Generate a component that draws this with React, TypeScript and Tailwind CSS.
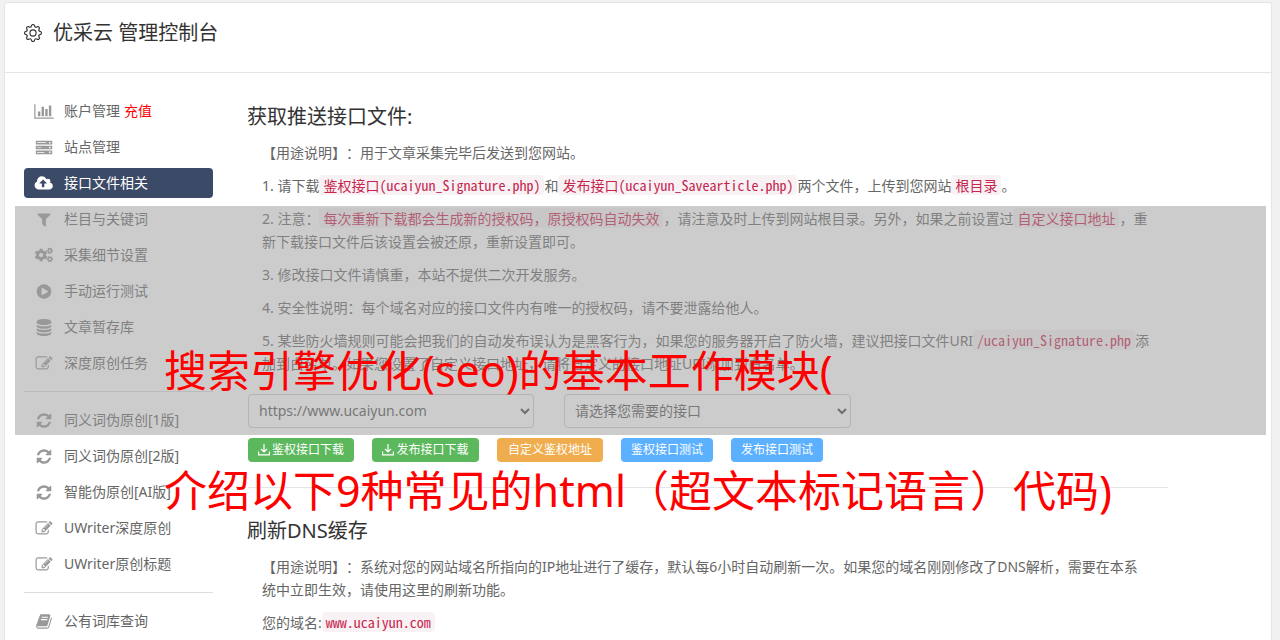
import type { ReactNode } from 'react';
import { FaCogs } from 'react-icons/fa';
import { BsGear } from 'react-icons/bs';

const icons = {
  chart: 'M640 896v512h-256v-512zM1024 384v1024h-256v-1024zM2048 1536v128h-2048v-1536h128v1408zM1408 640v768h-256v-768zM1792 256v1152h-256v-1152z',
  server:
    'M64 192h1728v384h-1728zM64 704h1728v384h-1728zM64 1216h1728v384h-1728zM192 352v64h960v-64zM192 864v64h448v-64zM192 1376v64h768v-64zM1456 304v160h160v-160zM1456 816v160h160v-160zM1456 1328v160h160v-160z',
  upload:
    'M1216 864q0-14-9-23l-352-352q-9-9-23-9t-23 9l-351 351q-10 12-10 24 0 14 9 23t23 9h224v352q0 13 9.5 22.5t22.5 9.5h192q13 0 22.5-9.5t9.5-22.5v-352h224q13 0 22.5-9.5t9.5-22.5zm640 288q0 159-112.5 271.5t-271.5 112.5h-1088q-185 0-316.5-131.5t-131.5-316.5q0-130 70-240t188-165q-2-30-2-43 0-212 150-362t362-150q156 0 285.5 87t188.5 231q71-62 166-62 106 0 181 75t75 181q0 76-41 138 130 31 213.5 135.5t83.5 238.5z',
  filter:
    'M1595 295q17 41-14 70l-493 493v742q0 42-39 59-13 5-25 5-27 0-45-19l-256-256q-19-19-19-45v-486l-493-493q-31-29-14-70 17-39 59-39h1280q42 0 59 39z',
  play: 'M896 128q209 0 385.5 103t279.5 279.5 103 385.5-103 385.5-279.5 279.5-385.5 103-385.5-103-279.5-279.5-103-385.5 103-385.5 279.5-279.5 385.5-103zm384 823q32-18 32-55t-32-55l-544-320q-31-19-64-1-32 19-32 56v640q0 37 32 56 16 8 32 8 17 0 32-9z',
  database:
    'M896 768q237 0 443-43t325-127v170q0 69-103 128t-280 93.5-385 34.5-385-34.5-280-93.5-103-128v-170q119 84 325 127t443 43zm0 768q237 0 443-43t325-127v170q0 69-103 128t-280 93.5-385 34.5-385-34.5-280-93.5-103-128v-170q119 84 325 127t443 43zm0-384q237 0 443-43t325-127v170q0 69-103 128t-280 93.5-385 34.5-385-34.5-280-93.5-103-128v-170q119 84 325 127t443 43zm0-1152q208 0 385 34.5t280 93.5 103 128v128q0 69-103 128t-280 93.5-385 34.5-385-34.5-280-93.5-103-128v-128q0-69 103-128t280-93.5 385-34.5z',
  edit: 'M888 1184l116-116-152-152-116 116v56h96v96h56zm440-720q-16-16-33 1l-350 350q-17 17-1 33t33-1l350-350q17-17 1-33zm80 594v190q0 119-84.5 203.5t-203.5 84.5h-832q-119 0-203.5-84.5t-84.5-203.5v-832q0-119 84.5-203.5t203.5-84.5h832q63 0 117 25 15 7 18 23 3 17-9 29l-49 49q-14 14-32 8-23-6-45-6h-832q-66 0-113 47t-47 113v832q0 66 47 113t113 47h832q66 0 113-47t47-113v-126q0-13 9-22l64-64q15-15 35-7t20 29zm-96-738l288 288-672 672h-288v-288zm444 132l-92 92-288-288 92-92q28-28 68-28t68 28l152 152q28 28 28 68t-28 68z',
  refresh:
    'M1639 1056q0 5-1 7-64 268-268 434.5t-478 166.5q-146 0-282.5-55t-243.5-157l-129 129q-19 19-45 19t-45-19-19-45v-448q0-26 19-45t45-19h448q26 0 45 19t19 45-19 45l-137 137q71 66 161 102t187 36q134 0 250-65t186-179q11-17 53-117 8-23 30-23h192q13 0 22.5 9.5t9.5 22.5zm25-800v448q0 26-19 45t-45 19h-448q-26 0-45-19t-19-45 19-45l138-138q-148-137-349-137-134 0-250 65t-186 179q-11 17-53 117-8 23-30 23h-199q-13 0-22.5-9.5t-9.5-22.5v-7q65-268 270-434.5t480-166.5q146 0 284 55.5t245 156.5l130-129q19-19 45-19t45 19 19 45z',
  book: 'M1703 478q40 57 18 129l-275 906q-19 64-76.5 107.5t-122.5 43.5h-923q-77 0-148.5-53.5t-99.5-131.5q-24-67-2-127 0-4 3-27t4-37q1-8-3-21.5t-3-19.5q2-11 8-21t16.5-23.5 16.5-23.5q23-38 45-91.5t30-91.5q3-10 .5-30t-.5-28q3-11 17-28t17-23q21-36 42-92t25-90q1-9-2.5-32t.5-28q4-13 22-30.5t22-22.5q19-26 42.5-84.5t27.5-96.5q1-8-3-25.5t-2-26.5q2-8 9-18t18-23 17-21q8-12 16.5-30.5t15-35 16-36 19.5-32 26.5-23.5 36-11.5 47.5 5.5l-1 3q38-9 51-9h761q74 0 114 56t18 130l-274 906q-36 119-71.5 153.5t-128.5 34.5h-869q-27 0-38 15-11 16-1 43 24 70 144 70h923q29 0 56-15.5t35-41.5l300-987q7-22 5-57 38 15 59 43zm-1064 2q-4 13 2 22.5t20 9.5h608q13 0 25.5-9.5t16.5-22.5l21-64q4-13-2-22.5t-20-9.5h-608q-13 0-25.5 9.5t-16.5 22.5zm-83 256q-4 13 2 22.5t20 9.5h608q13 0 25.5-9.5t16.5-22.5l21-64q4-13-2-22.5t-20-9.5h-608q-13 0-25.5 9.5t-16.5 22.5z',
};

type IconName = keyof typeof icons | 'cogs';

interface MenuItem {
  icon: IconName;
  label: string;
  extra?: string;
  active?: boolean;
}

const menu: MenuItem[][] = [
  [
    { icon: 'chart', label: '账户管理', extra: '充值' },
    { icon: 'server', label: '站点管理' },
    { icon: 'upload', label: '接口文件相关', active: true },
    { icon: 'filter', label: '栏目与关键词' },
    { icon: 'cogs', label: '采集细节设置' },
    { icon: 'play', label: '手动运行测试' },
    { icon: 'database', label: '文章暂存库' },
    { icon: 'edit', label: '深度原创任务' },
  ],
  [
    { icon: 'refresh', label: '同义词伪原创[1版]' },
    { icon: 'refresh', label: '同义词伪原创[2版]' },
    { icon: 'refresh', label: '智能伪原创[AI版]' },
    { icon: 'edit', label: 'UWriter深度原创' },
    { icon: 'edit', label: 'UWriter原创标题' },
  ],
  [{ icon: 'book', label: '公有词库查询' }],
];

const viewBoxes: Partial<Record<IconName, string>> = {
  chart: '0 0 2048 1792',
  upload: '0 0 1856 1792',
  server: '0 0 1856 1792',
};

function MenuIcon({ name }: { name: IconName }) {
  if (name === 'cogs') return <FaCogs size={18} />;
  return (
    <svg viewBox={viewBoxes[name] ?? '0 0 1792 1792'} className="h-[17px] w-5" fill="currentColor" fillRule="evenodd">
      <path d={icons[name]} />
    </svg>
  );
}

function Sidebar() {
  return (
    <nav className="w-[189px] shrink-0">
      {menu.map((group, i) => (
        <ul key={i} className={i > 0 ? 'mt-[13px] flex flex-col gap-1.5 border-t border-[#ddd] pt-[13px]' : 'flex flex-col gap-1.5'}>
          {group.map((item) => (
            <li key={item.label}>
              <a
                href="#"
                className={
                  item.active
                    ? 'flex h-[30px] items-center rounded-sm bg-[#3b4a66] pl-2.5 text-white'
                    : 'flex h-[30px] items-center pl-2.5 text-[#666]'
                }
              >
                <span className={item.active ? 'mr-2.5 flex w-5 justify-center' : 'mr-2.5 flex w-5 justify-center text-[#999]'}>
                  <MenuIcon name={item.icon} />
                </span>
                {item.label}
                {item.extra && <span className="ml-1 text-[#f00]">{item.extra}</span>}
              </a>
            </li>
          ))}
        </ul>
      ))}
    </nav>
  );
}

function Code({ children }: { children: ReactNode }) {
  return (
    <code className="rounded-sm bg-[#f9f2f4] px-1 font-['Noto_Sans_Mono_CJK_SC','Noto_Sans_CJK_SC',monospace] text-sm text-[#c7254e]">
      {children}
    </code>
  );
}

function Notes({ children }: { children: ReactNode }) {
  return <div className="mt-2.5 flex flex-col gap-2.5 pr-[17px] pl-[15px] leading-[23px]">{children}</div>;
}

function Select({ label, value, className }: { label: string; value: string; className: string }) {
  return (
    <div className={`relative ${className}`}>
      <select aria-label={label} className="h-[34px] w-full appearance-none rounded-sm border border-[#ccc] bg-white px-2.5 text-sm text-[#555]">
        <option>{value}</option>
      </select>
      <svg viewBox="0 0 10 7" className="pointer-events-none absolute top-[14px] right-1 h-[7px] w-[10px]" fill="none" stroke="#444" strokeWidth="2">
        <path d="M1 1l4 4 4-4" />
      </svg>
    </div>
  );
}

function DownloadIcon() {
  return (
    <svg viewBox="0 0 12 12" className="h-3 w-3" fill="none" stroke="currentColor" strokeWidth="1.2">
      <path d="M6 0v8M3 5l3 3 3-3M.6 7.5v3.4h10.8v-3.4" />
    </svg>
  );
}

function Button({ className, children }: { className: string; children: ReactNode }) {
  return (
    <button type="button" className={`flex h-6 items-center justify-center gap-0.5 rounded-sm text-xs text-white ${className}`}>
      {children}
    </button>
  );
}

export default function App() {
  return (
    <div className="relative flex h-screen flex-col overflow-hidden bg-[#f1f1f1] pt-0.5 pr-2 pl-1 font-['Noto_Sans','Noto_Sans_CJK_SC',sans-serif] text-sm text-[#666] [text-spacing-trim:space-all]">
      <div className="flex-1 rounded-t-sm border border-b-0 border-[#e5e5e5] bg-white">
        <header className="flex h-[70px] items-start gap-[11px] border-b border-[#e5e5e5] px-[19px] pt-[15px] text-[#333]">
          <BsGear size={18} className="mt-1.5" />
          <h1 className="text-xl leading-[30px]">优采云 管理控制台</h1>
        </header>

        <div className="flex px-[19px] pt-[23px]">
          <Sidebar />
          <main className="ml-[34px] max-w-[921px] flex-1">
            <h2 className="pt-[7px] text-xl leading-7 text-[#333]">获取推送接口文件:</h2>
            <Notes>
              <p>【用途说明】：用于文章采集完毕后发送到您网站。</p>
              <p>
                1. 请下载
                <Code>鉴权接口(ucaiyun_Signature.php)</Code>和<Code>发布接口(ucaiyun_Savearticle.php)</Code>
                两个文件，上传到您网站
                <Code>根目录</Code>。
              </p>
              <p>
                2. 注意：
                <Code>每次重新下载都会生成新的授权码，原授权码自动失效</Code>
                ，请注意及时上传到网站根目录。另外，如果之前设置过
                <Code>自定义接口地址</Code>
                ，重新下载接口文件后该设置会被还原，重新设置即可。
              </p>
              <p>3. 修改接口文件请慎重，本站不提供二次开发服务。</p>
              <p>4. 安全性说明：每个域名对应的接口文件内有唯一的授权码，请不要泄露给他人。</p>
              <p>
                5. 某些防火墙规则可能会把我们的自动发布误认为是黑客行为，如果您的服务器开启了防火墙，建议把接口文件URI
                <Code>/ucaiyun_Signature.php</Code>
                添加到白名单。如果您设置了自定义接口地址，请将自定义的接口地址URI添加到白名单。
              </p>
            </Notes>

            <div className="mt-[19px] ml-px flex gap-[30px]">
              <Select label="站点" value="https://www.ucaiyun.com" className="w-[286px]" />
              <Select label="接口" value="请选择您需要的接口" className="w-[287px]" />
            </div>
            <div className="mt-2.5 ml-px flex gap-[18px]">
              <Button className="w-[106px] bg-[#5cb85c]">
                <DownloadIcon />
                鉴权接口下载
              </Button>
              <Button className="w-[107px] bg-[#5cb85c]">
                <DownloadIcon />
                发布接口下载
              </Button>
              <Button className="w-[106px] bg-[#f0ad4e]">自定义鉴权地址</Button>
              <Button className="w-[92px] bg-[#5bb0ff]">鉴权接口测试</Button>
              <Button className="w-[92px] bg-[#5bb0ff]">发布接口测试</Button>
            </div>
            <hr className="mt-[25px] ml-px border-[#e5e5e5]" />

            <h2 className="mt-[22px] pt-[7px] text-xl leading-7 text-[#333]">刷新DNS缓存</h2>
            <Notes>
              <p>
                【用途说明】：系统对您的网站域名所指向的IP地址进行了缓存，默认每6小时自动刷新一次。如果您的域名刚刚修改了DNS解析，需要在本系统中立即生效，请使用这里的刷新功能。
              </p>
              <p>
                您的域名:
                <Code>www.ucaiyun.com</Code>
              </p>
            </Notes>
          </main>
        </div>
      </div>

      {/* caption band and the two headline lines lie over the console */}
      <div className="pointer-events-none absolute top-[206px] right-[14px] left-[15px] h-[229px] bg-[#999]/50" />
      <div className="pointer-events-none absolute top-[341px] left-[164px] text-[43px] leading-[60px] whitespace-nowrap text-[#f00]">
        <p>搜索引擎优化(seo)的基本工作模块(</p>
        <p className="mt-[60px]">介绍以下9种常见的html（超文本标记语言）代码)</p>
      </div>
    </div>
  );
}
